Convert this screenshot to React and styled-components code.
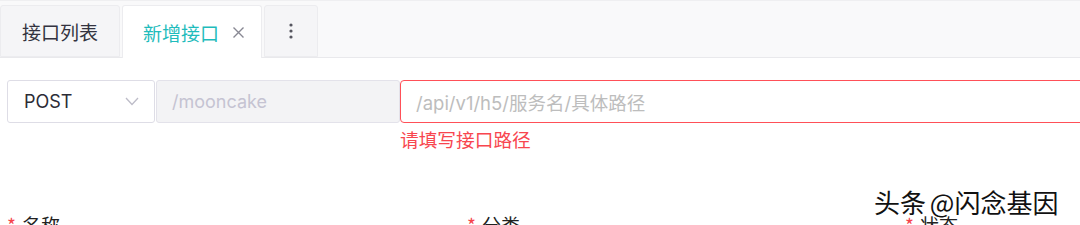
import React from 'react';
import styled, { createGlobalStyle } from 'styled-components';

const GlobalStyle = createGlobalStyle`
  html, body {
    margin: 0;
    padding: 0;
    background: #fff;
    overflow: hidden;
  }
  body {
    font-family: Inter, "Noto Sans CJK SC", "Noto Sans", sans-serif;
  }
`;

const Page = styled.div`
  position: relative;
  width: 1080px;
  height: 225px;
  overflow: hidden;
  background: #fff;
`;

const TabBar = styled.div`
  display: flex;
  align-items: flex-end;
  height: 58px;
  box-sizing: border-box;
  padding-top: 4px;
  background: #f9f9fa;
  border-top: 1px solid #efeff1;
  border-bottom: 1px solid #e9e9ec;
  gap: 2px;
`;

const Tab = styled.div`
  display: flex;
  align-items: center;
  gap: 13px;
  height: ${(p) => (p.active ? '53px' : '52px')};
  margin-bottom: ${(p) => (p.active ? '-1px' : '0')};
  box-sizing: border-box;
  padding: 0 ${(p) => p.padRight || 21}px 0 ${(p) => p.padLeft || 21}px;
  background: ${(p) => (p.active ? '#fff' : '#f5f5f7')};
  border: 1px solid #ececef;
  border-bottom: ${(p) => (p.active ? 'none' : '1px solid #ececef')};
  border-radius: 3px 3px 0 0;
  font-size: 19px;
  color: ${(p) => (p.active ? '#1fbcbc' : '#333340')};
  font-family: "Noto Sans CJK SC", sans-serif;
`;

const CloseIcon = styled.svg`
  width: 13px;
  height: 13px;
`;

const Dots = styled.svg`
  width: 4px;
  height: 16px;
`;

const Form = styled.div`
  padding: 22px 0 0 7px;
`;

const Row = styled.div`
  display: flex;
  align-items: flex-start;
`;

const Select = styled.div`
  display: flex;
  align-items: center;
  justify-content: space-between;
  width: 148px;
  height: 43px;
  box-sizing: border-box;
  padding: 0 15px 0 16px;
  border: 1px solid #dedde6;
  border-radius: 3px;
  font-size: 18px;
  color: #2c2c36;
  font-family: Inter, sans-serif;
`;

const Prefix = styled.div`
  display: flex;
  align-items: center;
  width: 244px;
  height: 43px;
  box-sizing: border-box;
  padding-left: 15px;
  margin-left: 1px;
  background: #f3f3f5;
  border: 1px solid #e3e2ea;
  border-radius: 3px;
  font-size: 18px;
  color: #c5c3d2;
  font-family: Inter, sans-serif;
`;

const PathField = styled.div`
  display: flex;
  flex-direction: column;
  flex: 1;
`;

const PathInput = styled.div`
  display: flex;
  align-items: center;
  flex-shrink: 0;
  height: 43px;
  box-sizing: border-box;
  padding-left: 15px;
  margin-right: -10px;
  border: 1px solid #ff5058;
  border-radius: 4px;
  font-size: 18.5px;
  color: #bdbdbd;
  font-family: Inter, "Noto Sans CJK SC", sans-serif;
`;

const ErrorText = styled.div`
  margin-top: 3px;
  font-size: 18.7px;
  line-height: 26px;
  color: #f8464f;
  font-family: "Noto Sans CJK SC", sans-serif;
`;

const Labels = styled.div`
  display: grid;
  grid-template-columns: 460px 438px 1fr;
  margin-top: 59px;
`;

const Label = styled.div`
  font-size: 19px;
  line-height: 27px;
  color: #222;
  font-family: "Noto Sans CJK SC", sans-serif;
  &::before {
    content: '*';
    color: #f5444c;
    margin-right: 6px;
  }
`;

const Watermark = styled.div`
  position: absolute;
  left: 874px;
  top: 183px;
  font-size: 26px;
  word-spacing: -2px;
  color: #111;
  font-family: "Noto Sans CJK SC", sans-serif;
  text-shadow: 1px 1px 0 #fff, -1px -1px 0 #fff, 1px -1px 0 #fff, -1px 1px 0 #fff;
`;

export default function App() {
  return (
    <Page>
      <GlobalStyle />
      <TabBar>
        <Tab>接口列表</Tab>
        <Tab active padLeft={20} padRight={16}>
          新增接口
          <CloseIcon viewBox="0 0 13 13">
            <path d="M1.5 1.5 L11.5 11.5 M11.5 1.5 L1.5 11.5" stroke="#888893" strokeWidth="1.4" fill="none" />
          </CloseIcon>
        </Tab>
        <Tab padLeft={24} padRight={24}>
          <Dots viewBox="0 0 4 16">
            <circle cx="2" cy="2" r="1.6" fill="#55555f" />
            <circle cx="2" cy="8" r="1.6" fill="#55555f" />
            <circle cx="2" cy="14" r="1.6" fill="#55555f" />
          </Dots>
        </Tab>
      </TabBar>
      <Form>
        <Row>
          <Select>
            POST
            <svg width="14" height="9" viewBox="0 0 14 9">
              <path d="M1 1 L7 7.5 L13 1" stroke="#bdbcc8" strokeWidth="1.3" fill="none" />
            </svg>
          </Select>
          <Prefix>/mooncake</Prefix>
          <PathField>
            <PathInput>/api/v1/h5/服务名/具体路径</PathInput>
            <ErrorText>请填写接口路径</ErrorText>
          </PathField>
        </Row>
        <Labels>
          <Label>名称</Label>
          <Label>分类</Label>
          <Label>状态</Label>
        </Labels>
      </Form>
      <Watermark>头条 @闪念基因</Watermark>
    </Page>
  );
}
